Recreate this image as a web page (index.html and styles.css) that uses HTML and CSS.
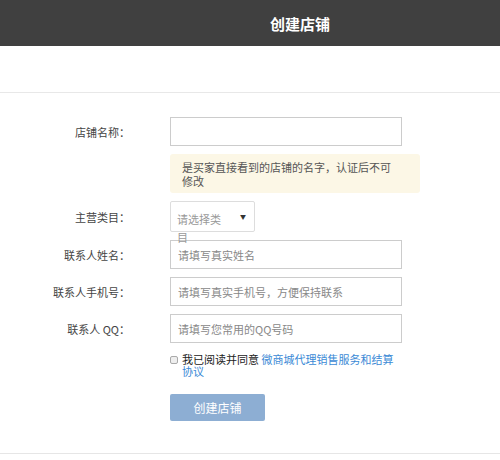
FILE: index.html
```html
<!DOCTYPE html>
<html lang="zh">
<head>
<meta charset="utf-8">
<title>创建店铺</title>
<link rel="stylesheet" href="styles.css">
</head>
<body>
<header class="topbar"><h1 class="title">创建店铺</h1></header>
<div class="spacer"></div>
<main class="content">
  <form class="form">
    <label class="label">店铺名称：</label>
    <div class="field"><input class="input" type="text"></div>

    <div class="field span2"><div class="hint"><span class="hint-text">是买家直接看到的店铺的名字，认证后不可修改</span></div></div>

    <label class="label">主营类目：</label>
    <div class="field"><div class="select"><span class="select-text">请选择类目</span><span class="caret">▼</span></div></div>

    <label class="label">联系人姓名：</label>
    <div class="field"><input class="input" type="text" placeholder="请填写真实姓名"></div>

    <label class="label">联系人手机号：</label>
    <div class="field"><input class="input" type="text" placeholder="请填写真实手机号，方便保持联系"></div>

    <label class="label">联系人 QQ：</label>
    <div class="field"><input class="input" type="text" placeholder="请填写您常用的QQ号码"></div>

    <div class="field span2 agree">
      <span class="check"></span>
      <p class="agree-text">我已阅读并同意 <a class="link" href="#">微商城代理销售服务和结算协议</a></p>
    </div>

    <div class="field span2"><button class="btn" type="button">创建店铺</button></div>
  </form>
</main>
</body>
</html>
```
FILE: styles.css
```css
* { box-sizing: border-box; }
html, body { margin: 0; padding: 0; background: #fff; }
body {
  font-family: "Noto Sans CJK SC", "Liberation Sans", sans-serif;
  font-size: 11px;
  color: #444;
}
.topbar {
  height: 46px;
  background: #404040;
  display: flex;
  align-items: center;
  justify-content: center;
  padding-left: 100px;
}
.title {
  margin: 0;
  font-size: 15px;
  font-weight: bold;
  color: #fff;
  line-height: 1;
}
.spacer {
  height: 47px;
  border-bottom: 1px solid #e8e8e8;
}
.content {
  padding: 24px 0 32px;
  border-bottom: 1px solid #e6e6e6;
}
.form {
  display: grid;
  grid-template-columns: 130px 232px;
  column-gap: 40px;
  row-gap: 8px;
  align-items: center;
}
.label {
  text-align: right;
  color: #444;
  white-space: nowrap;
  font-size: 11px;
}
.field { grid-column: 2; }
.span2 { grid-column: 2; }
.input {
  display: block;
  width: 232px;
  height: 29px;
  border: 1px solid #ccc;
  padding: 0 7px;
  font-family: inherit;
  font-size: 11px;
  color: #333;
  outline: none;
}
.input::placeholder { color: #888; }
.hint {
  width: 250px;
  height: 39px;
  background: #fcf7e6;
  border-radius: 3px;
  padding: 6px 12px;
  color: #555;
  line-height: 14px;
}
.hint-text { display: block; width: 215px; }
.select {
  width: 85px;
  height: 31px;
  border: 1px solid #ddd;
  border-radius: 2px;
  position: relative;
  padding: 8px 0 0 6px;
  color: #999;
  line-height: 18px;
}
.select-text { display: block; width: 48px; }
.caret {
  position: absolute;
  right: 8px;
  top: 6px;
  font-size: 6px;
  color: #333;
}
.agree {
  display: flex;
  align-items: flex-start;
  margin-top: 2px;
  color: #222;
}
.check {
  flex: none;
  width: 8px;
  height: 8px;
  border: 1px solid #aaa;
  border-radius: 2px;
  background: #eee;
  margin: 3px 4px 0 0;
}
.agree-text { width: 220px; margin: 0; line-height: 12px; }
.link { color: #3b8ad6; text-decoration: none; }
.btn {
  margin-top: 9px;
  width: 95px;
  height: 27px;
  border: none;
  border-radius: 2px;
  background: #8daed3;
  color: #fff;
  font-family: inherit;
  font-size: 12px;
  padding: 0;
}
```
